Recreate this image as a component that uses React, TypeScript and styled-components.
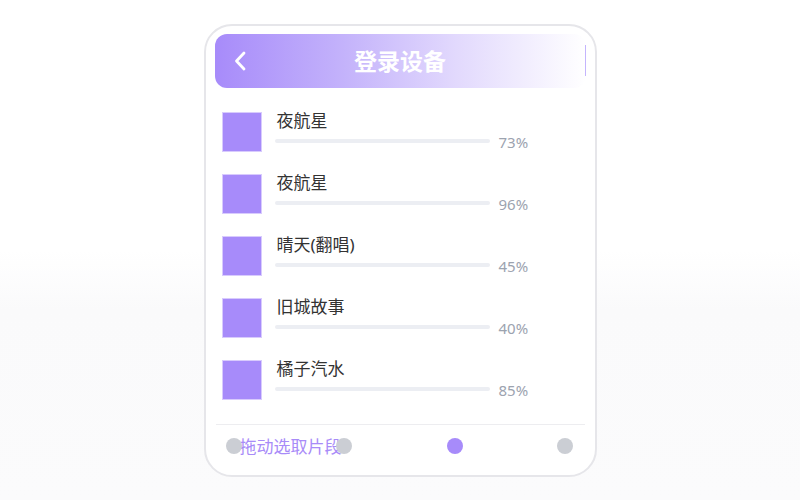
import React from 'react';
import styled, { createGlobalStyle } from 'styled-components';

interface Track {
  id: number;
  title: string;
  percent: number;
}

const tracks: Track[] = [
  { id: 1, title: '夜航星', percent: 73 },
  { id: 2, title: '夜航星', percent: 96 },
  { id: 3, title: '晴天(翻唱)', percent: 45 },
  { id: 4, title: '旧城故事', percent: 40 },
  { id: 5, title: '橘子汽水', percent: 85 },
];

const GlobalStyle = createGlobalStyle`
  html, body {
    margin: 0;
    padding: 0;
  }
  body {
    width: 800px;
    height: 500px;
    background: linear-gradient(180deg, #ffffff 0%, #ffffff 50%, #fafafb 62%, #fbfbfc 100%);
    font-family: 'Noto Sans', 'Noto Sans CJK SC', sans-serif;
  }
`;

const Page = styled.div`
  display: flex;
  justify-content: center;
  padding-top: 24px;
`;

const Card = styled.div`
  width: 371px;
  height: 441px;
  border: 2px solid #e6e6ea;
  border-radius: 28px;
  background: #fff;
  padding: 8px 9px 0 9px;
  display: flex;
  flex-direction: column;
`;

const Header = styled.div`
  position: relative;
  flex-shrink: 0;
  height: 54px;
  border-radius: 12px;
  background: linear-gradient(90deg, #a78bfa 0%, #c4b3fb 35%, #e2d9fd 65%, #ffffff 100%);
  display: flex;
  align-items: center;
  justify-content: center;

  &::after {
    content: '';
    position: absolute;
    right: 0;
    top: 11px;
    width: 1px;
    height: 31px;
    background: #c4b5fd;
  }
`;

const BackButton = styled.button`
  position: absolute;
  left: 18px;
  top: 17px;
  width: 14px;
  height: 20px;
  padding: 0;
  border: none;
  background: none;
  display: flex;
  align-items: center;
  justify-content: center;
`;

const Title = styled.h1`
  margin: 0;
  font-size: 23px;
  line-height: 1;
  font-weight: 700;
  color: #fff;
`;

const List = styled.ul`
  list-style: none;
  margin: 0;
  padding: 24px 0 0 7px;
  display: flex;
  flex-direction: column;
  gap: 22px;
  flex: 1;
`;

const Row = styled.li`
  display: flex;
  align-items: flex-start;
  gap: 13px;
  height: 40px;
  flex-shrink: 0;
`;

const Cover = styled.div`
  width: 38px;
  height: 38px;
  background: #a78bfa;
  border: 1px solid #d8cbfd;
  flex-shrink: 0;
`;

const Info = styled.div`
  display: flex;
  flex-direction: column;
`;

const TrackName = styled.span`
  font-size: 17px;
  line-height: 17px;
  color: #333;
  margin-left: 2px;
`;

const ProgressRow = styled.div`
  display: flex;
  align-items: flex-start;
  gap: 9px;
  margin-top: 10px;
`;

const Bar = styled.div`
  width: 215px;
  height: 4px;
  border-radius: 2px;
  background: #eceef3;
`;

const Percent = styled.span`
  font-size: 15px;
  line-height: 15px;
  color: #9ca3af;
  margin-top: -4px;
`;

const Footer = styled.div`
  position: relative;
  flex-shrink: 0;
  border-top: 1px solid #ededf0;
  margin: 0 1px;
  height: 37px;
  display: flex;
  align-items: flex-start;
  justify-content: space-between;
  padding: 13px 11px 0 10px;
`;

const Dot = styled.span<{ active?: boolean }>`
  position: relative;
  z-index: 1;
  width: 16px;
  height: 16px;
  border-radius: 50%;
  background: ${({ active }) => (active ? '#a78bfa' : '#cbced4')};
`;

const DragHint = styled.span`
  position: absolute;
  left: 24px;
  top: 13px;
  font-size: 17px;
  line-height: 17px;
  color: #a88bf8;
  pointer-events: none;
`;

export default function App() {
  return (
    <>
      <GlobalStyle />
      <Page>
        <Card>
          <Header>
            <BackButton aria-label="返回">
              <svg width="14" height="20" viewBox="0 0 14 20" fill="none">
                <path
                  d="M11 2 L3.5 10 L11 18"
                  stroke="#fff"
                  strokeWidth="2.8"
                  strokeLinecap="round"
                  strokeLinejoin="round"
                />
              </svg>
            </BackButton>
            <Title>登录设备</Title>
          </Header>
          <List>
            {tracks.map((track) => (
              <Row key={track.id}>
                <Cover />
                <Info>
                  <TrackName>{track.title}</TrackName>
                  <ProgressRow>
                    <Bar />
                    <Percent>{track.percent}%</Percent>
                  </ProgressRow>
                </Info>
              </Row>
            ))}
          </List>
          <Footer>
            <DragHint>拖动选取片段</DragHint>
            <Dot />
            <Dot />
            <Dot active />
            <Dot />
          </Footer>
        </Card>
      </Page>
    </>
  );
}
